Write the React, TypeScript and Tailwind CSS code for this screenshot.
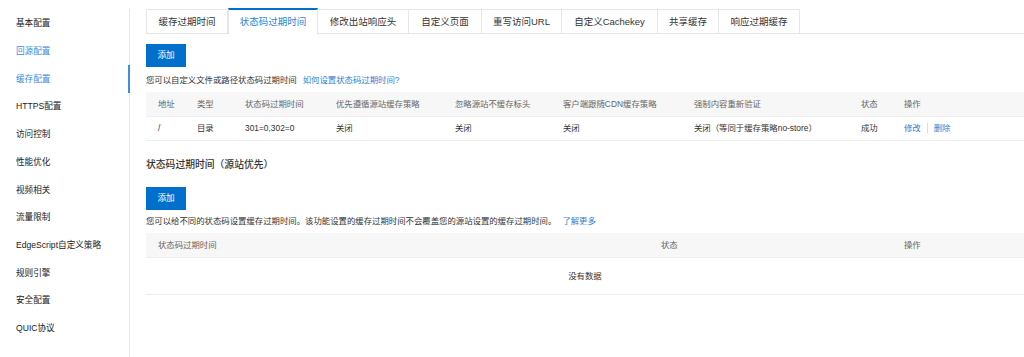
import React from 'react';

const font = { fontFamily: '"Liberation Sans", "Noto Sans CJK SC", sans-serif' };

const menu = [
  { label: '基本配置' },
  { label: '回源配置', blue: true },
  { label: '缓存配置', blue: true, active: true },
  { label: 'HTTPS配置' },
  { label: '访问控制' },
  { label: '性能优化' },
  { label: '视频相关' },
  { label: '流量限制' },
  { label: 'EdgeScript自定义策略' },
  { label: '规则引擎' },
  { label: '安全配置' },
  { label: 'QUIC协议' },
];

const tabs = [
  { label: '缓存过期时间', w: 'w-[82px]' },
  { label: '状态码过期时间', w: 'w-[90px]' },
  { label: '修改出站响应头', w: 'w-[91px]' },
  { label: '自定义页面', w: 'w-[73px]' },
  { label: '重写访问URL', w: 'w-[80px]' },
  { label: '自定义Cachekey', w: 'w-[96px]' },
  { label: '共享缓存', w: 'w-[61px]' },
  { label: '响应过期缓存', w: 'w-[81px]' },
];

const cols = [
  { title: '地址', w: 'w-[39px]', value: '/' },
  { title: '类型', w: 'w-[48px]', value: '目录' },
  { title: '状态码过期时间', w: 'w-[91px]', value: '301=0,302=0' },
  { title: '优先遵循源站缓存策略', w: 'w-[119px]', value: '关闭' },
  { title: '忽略源站不缓存标头', w: 'w-[108px]', value: '关闭' },
  { title: '客户端跟随CDN缓存策略', w: 'w-[131px]', value: '关闭' },
  { title: '强制内容重新验证', w: 'w-[167px]', value: '关闭（等同于缓存策略no-store）' },
  { title: '状态', w: 'w-[43px]', value: '成功' },
];

function Sidebar() {
  return (
    <aside className="w-[130px] shrink-0 pt-[9px]">
      <div className="border-r border-[#e6e6e6] min-h-[348px] pt-[1px]">
        {menu.map((m) => (
          <div key={m.label} className="relative h-[27.7px] flex items-center pl-4">
            <span className={`text-[8.6px] ${m.blue ? 'text-[#3b8ee0]' : 'text-[#222]'}`}>{m.label}</span>
            {m.active && <span className="absolute right-[-1px] top-0 h-[28px] w-[2px] bg-[#3b8ee0]" />}
          </div>
        ))}
      </div>
    </aside>
  );
}

function Tabs() {
  return (
    <div className="flex border-b border-[#e5e5e5] h-[26px] mt-2">
      {tabs.map((t, i) =>
        i === 1 ? (
          <div key={t.label} className={`${t.w} shrink-0 h-[26px] -mb-px flex items-center justify-center bg-white border-t-2 border-t-[#0070cc] border-x border-x-[#e5e5e5] text-[9.5px] text-[#2f7fd3]`}>
            {t.label}
          </div>
        ) : (
          <div key={t.label} className={`${t.w} shrink-0 h-[25px] mt-px flex items-center justify-center border-t border-r border-[#e5e5e5] ${i === 0 ? 'border-l' : ''} ${i === 2 ? 'border-l-0' : ''} text-[9.5px] text-[#333]`}>
            {t.label}
          </div>
        )
      )}
    </div>
  );
}

function AddButton() {
  return (
    <button className="w-[40px] h-[23px] bg-[#0070cc] text-white text-[8.6px] flex items-center justify-center">添加</button>
  );
}

export default function App() {
  return (
    <div className="flex w-[1024px] h-[357px] bg-white overflow-hidden text-[#333]" style={font}>
      <Sidebar />
      <main className="flex-1 pl-4">
        <Tabs />

        <div className="mt-[10px]">
          <AddButton />
        </div>
        <p className="mt-[7px] h-[13px] text-[8.4px] leading-[13px] text-[#333]">
          您可以自定义文件或路径状态码过期时间
          <span className="ml-[6px] text-[#2f7fd3]">如何设置状态码过期时间?</span>
        </p>

        {/* table 1 */}
        <div className="mt-[5px] w-[900px] text-[8.4px]">
          <div className="flex h-[25px] items-center bg-[#f7f7f7] border-b border-[#eeeeee] text-[#666]">
            {cols.map((c) => (
              <div key={c.title} className={`${c.w} pl-3 shrink-0`}>{c.title}</div>
            ))}
            <div className="pl-3">操作</div>
          </div>
          <div className="flex h-[24px] items-center border-b border-[#eeeeee] text-[#333]">
            {cols.map((c) => (
              <div key={c.title} className={`${c.w} pl-3 shrink-0`}>{c.value}</div>
            ))}
            <div className="pl-3 flex items-center text-[#2f7fd3]">
              <span>修改</span>
              <span className="mx-[6px] h-[10px] w-px bg-[#ddd]" />
              <span>删除</span>
            </div>
          </div>
        </div>

        <h3 className="mt-[17px] h-[14px] leading-[14px] text-[9.8px] font-medium text-[#333]">状态码过期时间（源站优先）</h3>

        <div className="mt-[15px]">
          <AddButton />
        </div>
        <p className="mt-[5px] h-[13px] text-[8.4px] leading-[13px] text-[#333]">
          您可以给不同的状态码设置缓存过期时间。该功能设置的缓存过期时间不会覆盖您的源站设置的缓存过期时间。
          <span className="ml-[6px] text-[#2f7fd3]">了解更多</span>
        </p>

        {/* table 2 */}
        <div className="mt-[5px] w-[878px] text-[8.4px]">
          <div className="flex h-[25px] items-center bg-[#f7f7f7] border-b border-[#eeeeee] text-[#666]">
            <div className="w-[503px] pl-3 shrink-0">状态码过期时间</div>
            <div className="w-[243px] pl-3 shrink-0">状态</div>
            <div className="pl-3">操作</div>
          </div>
          <div className="flex h-[37px] items-center justify-center border-b border-[#eeeeee] text-[#333]">
            没有数据
          </div>
        </div>
      </main>
    </div>
  );
}
